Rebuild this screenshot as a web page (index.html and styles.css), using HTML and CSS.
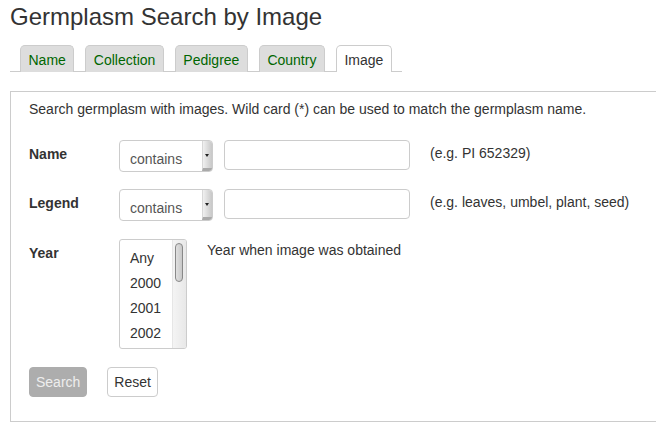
FILE: index.html
```html
<!DOCTYPE html>
<html>
<head>
<meta charset="utf-8">
<link rel="stylesheet" href="styles.css">
</head>
<body>
<h1 class="title">Germplasm Search by Image</h1>
<ul class="tabs">
  <li class="tab">Name</li>
  <li class="tab">Collection</li>
  <li class="tab">Pedigree</li>
  <li class="tab">Country</li>
  <li class="tab active">Image</li>
</ul>
<div class="panel">
  <p class="intro">Search germplasm with images. Wild card (*) can be used to match the germplasm name.</p>
  <div class="row">
    <div class="label">Name</div>
    <div class="select"><span class="select-text">contains</span><span class="select-btn"><span class="arrow"></span></span></div>
    <div class="input"></div>
    <div class="hint">(e.g. PI 652329)</div>
  </div>
  <div class="row">
    <div class="label">Legend</div>
    <div class="select"><span class="select-text">contains</span><span class="select-btn"><span class="arrow"></span></span></div>
    <div class="input"></div>
    <div class="hint">(e.g. leaves, umbel, plant, seed)</div>
  </div>
  <div class="row year-row">
    <div class="label">Year</div>
    <div class="listbox">
      <div class="options">
        <div class="option">Any</div>
        <div class="option">2000</div>
        <div class="option">2001</div>
        <div class="option">2002</div>
      </div>
      <div class="scrollbar"><div class="thumb"></div></div>
    </div>
    <div class="year-hint">Year when image was obtained</div>
  </div>
  <div class="buttons">
    <div class="btn btn-search">Search</div>
    <div class="btn btn-reset">Reset</div>
  </div>
</div>
</body>
</html>
```
FILE: styles.css
```css
html, body {
  margin: 0;
  padding: 0;
  background: #fff;
}
body {
  font-family: "Liberation Sans", Arial, sans-serif;
  color: #333;
  font-size: 14px;
  padding: 0 0 0 10px;
  overflow: hidden;
  height: 429px;
}
.title {
  font-size: 24px;
  font-weight: normal;
  line-height: 28px;
  margin: 3px 0 0 0;
  color: #333;
}
.tabs {
  list-style: none;
  margin: 14px 0 0 0;
  padding: 0 0 0 10px;
  width: 382px;
  display: flex;
  gap: 11px;
  border-bottom: 1px solid #ccc;
  height: 26px;
}
.tab {
  box-sizing: border-box;
  height: 27px;
  padding: 6px 7.5px 0 7.5px;
  background: #ddd;
  color: #006600;
  border: 1px solid #ccc;
  border-bottom: none;
  border-radius: 5px 5px 0 0;
  line-height: 16px;
}
.tab.active {
  background: #fff;
  color: #333;
  height: 27px;
}
.panel {
  margin-top: 19px;
  border: 1px solid #ccc;
  border-right: none;
  height: 331px;
  box-sizing: border-box;
  padding: 9px 0 0 18px;
}
.intro {
  margin: 0;
  line-height: 16px;
}
.row {
  display: flex;
  align-items: flex-start;
  margin-top: 23px;
  height: 32px;
}
.row + .row {
  margin-top: 17px;
}
.label {
  width: 90px;
  font-weight: bold;
  padding-top: 6px;
  line-height: 16px;
}
.select {
  box-sizing: border-box;
  width: 94px;
  height: 32px;
  border: 1px solid #ccc;
  border-radius: 4px;
  display: flex;
  overflow: hidden;
  background: #fff;
}
.select-text {
  flex: 1;
  padding: 10px 0 0 10px;
  line-height: 16px;
  color: #555;
}
.select-btn {
  width: 9px;
  background: linear-gradient(to right, #f0f0f0, #c8c8c8);
  border-left: 1px solid #d8d8d8;
  border-bottom: 3px solid #aaa;
  position: relative;
}
.arrow {
  position: absolute;
  left: 2px;
  top: 13px;
  width: 0;
  height: 0;
  border-left: 2.5px solid transparent;
  border-right: 2.5px solid transparent;
  border-top: 3px solid #222;
}
.input {
  box-sizing: border-box;
  width: 186px;
  height: 30px;
  border: 1px solid #ccc;
  border-radius: 4px;
  margin-left: 11px;
}
.hint {
  margin-left: 20px;
  padding-top: 5px;
  line-height: 16px;
}
.year-row {
  height: auto;
}
.row.year-row {
  margin-top: 18px;
}
.listbox {
  box-sizing: border-box;
  width: 68px;
  height: 110px;
  border: 1px solid #ccc;
  border-radius: 3px;
  display: flex;
  overflow: hidden;
}
.options {
  flex: 1;
  padding: 10px 0 0 10px;
  color: #333;
}
.option {
  height: 25px;
  line-height: 16px;
}
.scrollbar {
  width: 14px;
  border-left: 1px solid #e6e6e6;
  background: linear-gradient(to right, #f4f4f4, #e8e8e8);
  padding: 3px 0 0 2px;
  box-sizing: border-box;
}
.thumb {
  width: 8px;
  height: 39px;
  border: 1px solid #888;
  border-radius: 5px;
  background: linear-gradient(to right, #e0e0e0, #c8c8c8);
  box-sizing: border-box;
}
.year-hint {
  margin-left: 20px;
  padding-top: 3px;
  line-height: 16px;
}
.buttons {
  display: flex;
  gap: 20px;
  margin-top: 18px;
}
.btn {
  box-sizing: border-box;
  height: 30px;
  border-radius: 4px;
  line-height: 28px;
  padding: 0 6px;
}
.btn-search {
  background: #adadad;
  color: #eee;
  border: 1px solid #adadad;
}
.btn-reset {
  background: #fff;
  border: 1px solid #ccc;
  color: #333;
}
```
